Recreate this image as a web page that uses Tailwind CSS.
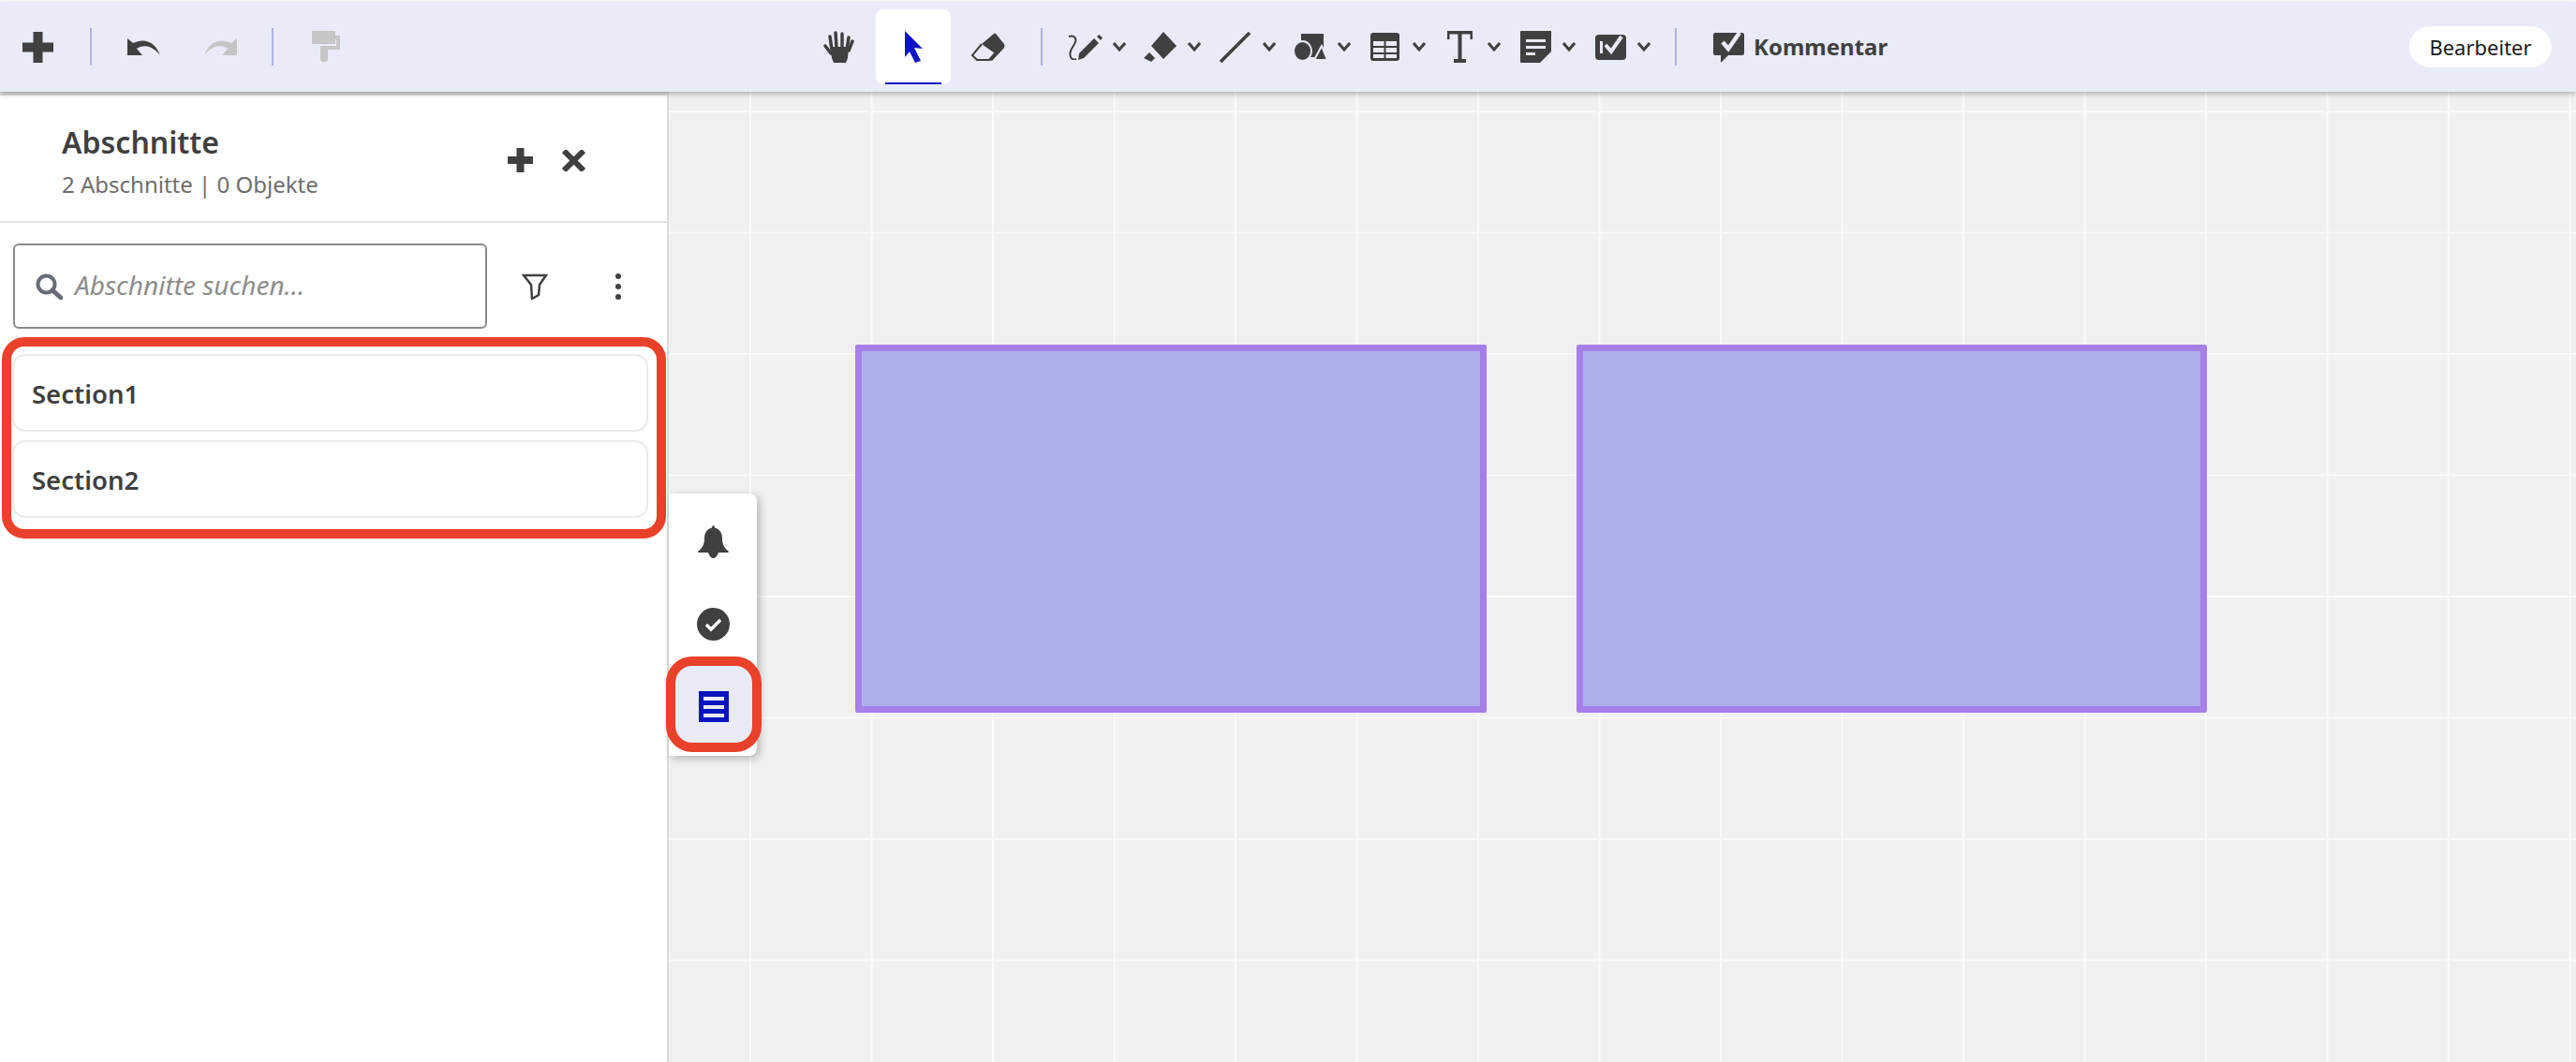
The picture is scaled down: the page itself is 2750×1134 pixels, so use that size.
<!DOCTYPE html>
<html lang="de">
<head>
  <meta charset="UTF-8" />
  <title>Abschnitte</title>
  <script src="https://cdn.jsdelivr.net/npm/@tailwindcss/browser@4"></script>
</head>
<body class="bg-white font-['Noto_Sans',sans-serif] text-[#404040]">
<div class="flex h-[1134px] w-[2750px] flex-col overflow-hidden pt-[2px]">

  <!-- toolbar -->
  <div class="relative z-10 flex h-[96px] shrink-0 items-center bg-[#e9ebf8] shadow-[0_2px_6px_rgba(0,0,0,0.3)]">
    <svg class="ml-[24px]" width="33" height="33" viewBox="0 0 33 33" fill="#404040"><path d="M11.5 0h10v11.500h11.500v10h-11.500v11.500h-10v-11.500h-11.500v-10h11.500z"/></svg>
    <div class="ml-[39px] h-[40px] w-[2px] bg-[#aeb3e8]"></div>
    <svg class="ml-[38px]" width="35" height="18" viewBox="0 0 35 18" fill="#404040"><path d="M0 0V18H16L10 11C17 6 27 8 35 18C31 6 20-2 6 5Z"/></svg>
    <svg class="ml-[47px]" width="35" height="18" viewBox="0 0 35 18" fill="#c6c6c6"><path d="M35 0V18H19L25 11C18 6 8 8 0 18C4 6 15-2 29 5Z"/></svg>
    <div class="ml-[37px] h-[40px] w-[2px] bg-[#aeb3e8]"></div>
    <svg class="ml-[41px]" width="30" height="34" viewBox="0 0 30 34" fill="#c6c6c6"><path d="M0 0H25V5H30V20H17V31Q13 36 9 31V16H26V9H25V14H0Z"/></svg>

    <!-- tools -->
    <svg class="ml-[516px]" width="33" height="34" viewBox="0 0 33 34" fill="#404040" stroke="#404040"><path stroke="none" d="M7 17H27L26 29L24 34H11L9 29Z"/><g stroke-width="3.500" stroke-linecap="round" fill="none"><path d="M2 16L8 24"/><path d="M9 20L7 6"/><path d="M14 18L13 2"/><path d="M20 18V3"/><path d="M25 20L27 7"/><path d="M27 21L31 11"/></g></svg>
    <div class="relative ml-[23px] flex h-[80px] w-[80px] items-center justify-center rounded-[8px] bg-white">
      <svg width="19" height="34" viewBox="0 0 19 34" fill="#0a14c0"><path d="M0 0L19 19L10 18L17 32L11 34L5 22L0 28Z"/></svg>
      <div class="absolute bottom-0 left-[10px] h-[2px] w-[60px] bg-[#0a14c0]"></div>
    </div>
    <svg class="ml-[22px]" width="36" height="30" viewBox="0 0 36 30" fill="#404040"><path d="M24 1Q25 0 26 1L35 12Q36 14 35 16L22 30L19 29L25 22L11 12Z"/><path d="M11 12L1 24L6 29H19L25 22" fill="none" stroke="#404040" stroke-width="2"/></svg>
    <div class="ml-[38px] h-[40px] w-[2px] bg-[#aeb3e8]"></div>

    <svg class="ml-[27px]" width="37" height="27" viewBox="0 0 37 27" fill="#404040"><path d="M1 2C8 0 10 5 7 10C4 15 1 19 3 24C4 27 8 27 9 26" fill="none" stroke="#404040" stroke-width="2"/><path d="M12 20L28 4L33 9L17 25L11 27Z"/><path d="M31 2L33 0L37 3L35 6Z"/></svg>
    <svg class="ml-[11px]" width="14" height="10" viewBox="0 0 14 10" fill="none" stroke="#404040" stroke-width="3"><path d="M1 1L7 8L13 1"/></svg>
    <svg class="ml-[19px]" width="35" height="32" viewBox="0 0 35 32" fill="#404040"><path d="M21 0L35 15L21 29L8 15Z"/><path d="M0 28L6 22L12 28L8 32Z"/></svg>
    <svg class="ml-[12px]" width="14" height="10" viewBox="0 0 14 10" fill="none" stroke="#404040" stroke-width="3"><path d="M1 1L7 8L13 1"/></svg>
    <svg class="ml-[20px]" width="33" height="33" viewBox="0 0 33 33" fill="none" stroke="#404040" stroke-width="3.500"><path d="M1 32L32 1"/></svg>
    <svg class="ml-[13px]" width="14" height="10" viewBox="0 0 14 10" fill="none" stroke="#404040" stroke-width="3"><path d="M1 1L7 8L13 1"/></svg>
    <svg class="ml-[20px]" width="35" height="28" viewBox="0 0 35 28" fill="#404040"><path d="M7 0H31V25H7Z"/><ellipse cx="8.500" cy="18.500" rx="9.500" ry="10.500" stroke="#e9ebf8" stroke-width="2"/><path d="M29 13L21 28H35Z" stroke="#e9ebf8" stroke-width="2"/></svg>
    <svg class="ml-[11px]" width="14" height="10" viewBox="0 0 14 10" fill="none" stroke="#404040" stroke-width="3"><path d="M1 1L7 8L13 1"/></svg>
    <svg class="ml-[21px]" width="31" height="30" viewBox="0 0 31 30"><rect width="31" height="30" rx="3" fill="#404040"/><path fill="#e9ebf8" d="M3 9H14.500V14H3ZM16.500 9H28V14H16.500ZM3 16H14.500V21H3ZM16.500 16H28V21H16.500ZM3 23H14.500V27H3ZM16.500 23H28V27H16.500Z"/></svg>
    <svg class="ml-[14px]" width="14" height="10" viewBox="0 0 14 10" fill="none" stroke="#404040" stroke-width="3"><path d="M1 1L7 8L13 1"/></svg>
    <svg class="ml-[23px]" width="27" height="34" viewBox="0 0 27 34" fill="#404040"><path d="M0 0H27V9H24.500V3.500H15.500V30H20V34H7V30H11.500V3.500H2.500V9H0Z"/></svg>
    <svg class="ml-[16px]" width="14" height="10" viewBox="0 0 14 10" fill="none" stroke="#404040" stroke-width="3"><path d="M1 1L7 8L13 1"/></svg>
    <svg class="ml-[21px]" width="33" height="34" viewBox="0 0 33 34"><path fill="#404040" d="M0 1Q0 0 1 0H33V22L21 34H1Q0 34 0 33Z"/><path fill="#e9ebf8" d="M6 9H27V12H6ZM6 16H27V19H6ZM6 23H16V26H6Z"/><path fill="#e9ebf8" d="M23 33L32 24H33V25L24 34Z"/></svg>
    <svg class="ml-[12px]" width="14" height="10" viewBox="0 0 14 10" fill="none" stroke="#404040" stroke-width="3"><path d="M1 1L7 8L13 1"/></svg>
    <svg class="ml-[21px]" width="33" height="28" viewBox="0 0 33 28"><rect y="1" width="33" height="27" rx="4" fill="#404040"/><path fill="#e9ebf8" d="M5 8H8V21H5Z"/><path d="M11 12L17 19L28 3" fill="none" stroke="#e9ebf8" stroke-width="4"/></svg>
    <svg class="ml-[12px]" width="14" height="10" viewBox="0 0 14 10" fill="none" stroke="#404040" stroke-width="3"><path d="M1 1L7 8L13 1"/></svg>
    <div class="ml-[26px] h-[40px] w-[2px] bg-[#aeb3e8]"></div>

    <svg class="ml-[39px]" width="33" height="33" viewBox="0 0 33 33"><path fill="#404040" d="M0 3Q0 1 2 1H31Q33 1 33 3V23Q33 25 31 25H16L8 33V25H2Q0 25 0 23Z"/><path d="M10 11L16 18L28 1" fill="none" stroke="#e9ebf8" stroke-width="4.500"/></svg>
    <span class="ml-[10px] text-[24px] leading-none font-bold">Kommentar</span>

    <div class="ml-auto mr-[26px] flex h-[44px] w-[152px] items-center justify-center rounded-full bg-white text-[22px] text-[#1a1a1a]">Bearbeiter</div>
  </div>

  <div class="flex min-h-0 flex-1">
    <!-- sections panel -->
    <div class="flex w-[714px] shrink-0 flex-col border-t-4 border-r-2 border-t-[#dfdfdd] border-r-[#dcdcdc] bg-white">
      <div class="flex h-[136px] shrink-0 items-center border-b-2 border-[#dfdfdf] pl-[66px]">
        <div class="mt-[6px] w-[476px] shrink-0">
          <div class="text-[32px] leading-[40px] font-semibold text-[#3f3f3f]">Abschnitte</div>
          <div class="mt-[9px] text-[24px] leading-[32px] text-[#6e6e6e]">2 Abschnitte | 0 Objekte</div>
        </div>
        <svg class="mt-[4px]" width="27" height="26" viewBox="0 0 27 26" fill="#404040"><path d="M9.500 0h8v9h9.500v8h-9.500v9h-8v-9h-9.500v-8h9.500z"/></svg>
        <svg class="ml-[31px] mt-[4px]" width="25" height="23" viewBox="0 0 25 23" fill="none" stroke="#404040" stroke-width="6"><path d="M2 1L23 22M23 1L2 22"/></svg>
      </div>

      <div class="flex items-center pt-[22px] pl-[14px]">
        <div class="flex h-[91px] w-[506px] items-center rounded-[6px] border-2 border-[#8a8a8a] pl-[22px]">
          <svg width="29" height="28" viewBox="0 0 29 28" fill="none" stroke="#666b75"><circle cx="11.500" cy="11.500" r="9" stroke-width="4"/><path d="M18 18L27 26" stroke-width="5" stroke-linecap="round"/></svg>
          <span class="ml-[13px] pb-[3px] text-[28px] italic text-[#8c8c8c]">Abschnitte suchen...</span>
        </div>
        <svg class="ml-[37px]" width="28" height="28" viewBox="0 0 28 28" fill="none" stroke="#404040" stroke-width="2.500"><path d="M2 2H26L19 12L18 23L11 27L10 12Z"/></svg>
        <svg class="ml-[71px]" width="8" height="30" viewBox="0 0 8 30" fill="#404040"><circle cx="4" cy="4" r="3"/><circle cx="4" cy="15" r="3"/><circle cx="4" cy="26" r="3"/></svg>
      </div>

      <div class="mt-[9px] ml-[2px] flex h-[215px] w-[709px] flex-col gap-[9px] rounded-[24px] border-[10px] border-[#e9412a] pt-[8px] pl-px">
        <div class="flex h-[83px] w-[679px] items-center rounded-[14px] border-2 border-[#eaeaea] pt-[2px] pl-[19px] text-[27.5px] font-semibold text-[#3f3f3f]">Section1</div>
        <div class="flex h-[83px] w-[679px] items-center rounded-[14px] border-2 border-[#eaeaea] pt-[2px] pl-[19px] text-[27.5px] font-semibold text-[#3f3f3f]">Section2</div>
      </div>
    </div>

    <!-- canvas -->
    <div class="relative flex flex-1 items-start gap-[96px] bg-[#f0f0f0] bg-[linear-gradient(to_right,#fafafa_2px,transparent_2px),linear-gradient(to_bottom,#fafafa_2px,transparent_2px)] bg-[size:129.5px_129.5px] bg-[position:86px_20px] pt-[270px] pl-[199px]">
      <div class="h-[393px] w-[674px] rounded-[2px] border-[7px] border-[#a57fea] bg-[#abb0e8]"></div>
      <div class="h-[393px] w-[673px] rounded-[2px] border-[7px] border-[#a57fea] bg-[#abb0e8]"></div>

      <!-- side rail -->
      <div class="absolute top-[429px] left-0 flex h-[280px] w-[94px] flex-col items-center rounded-r-[8px] bg-white shadow-[3px_3px_8px_rgba(0,0,0,0.25)]">
        <svg class="mt-[34px]" width="33" height="35" viewBox="0 0 33 35" fill="#404040"><path d="M16.500 0Q18 0 18 2.500C24 4 26 9 26 14C26 21 29 25 33 28Q33 29 32 29H22Q20 35 16.500 35Q13 35 11 29H1Q0 29 0 28C4 25 7 21 7 14C7 9 9 4 15 2.500Q15 0 16.500 0Z"/></svg>
        <svg class="mt-[53px]" width="35" height="35" viewBox="0 0 35 35"><circle cx="17.500" cy="17.500" r="17.500" fill="#404040"/><path d="M10 18L15 23L25 13" fill="none" stroke="#fff" stroke-width="3.500"/></svg>
      </div>
      <div class="absolute top-[603px] left-[-3px] flex h-[102px] w-[102px] items-center justify-center rounded-[28px] border-[10px] border-[#e9412a] bg-[#e9ebf8]">
        <svg class="mt-[4px]" width="32" height="33" viewBox="0 0 32 33"><rect width="32" height="33" fill="#0a14c0"/><path fill="#e9ebf8" d="M5 6H27V10H5ZM5 15H27V19H5ZM5 24H27V28H5Z"/></svg>
      </div>
    </div>
  </div>
</div>
</body>
</html>
